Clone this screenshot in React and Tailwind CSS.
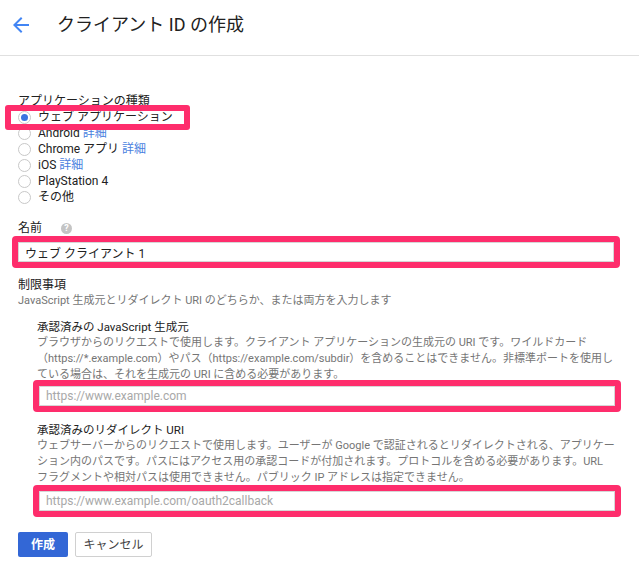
import React from "react";

const font = { fontFamily: 'Roboto, "Noto Sans CJK JP", sans-serif' };

/* pink annotation frame around a real input */
const Marked = ({ value, placeholder, className = "" }) => (
  <div className={`rounded-[4px] border-[6px] border-[#fe2d6c] ${className}`}>
    <input
      readOnly
      defaultValue={value}
      placeholder={placeholder}
      className="block h-[20px] w-full border border-[#d6d6d6] bg-white px-[6px] text-[12px] text-[#212121] outline-none placeholder:text-[#a8a8a8]"
    />
  </div>
);

const Radio = ({ checked, children }) => (
  <label className="flex h-4 items-center gap-[7px]">
    <span className="flex h-[13px] w-[13px] items-center justify-center rounded-full border border-[#c8c8c8] bg-white">
      {checked && <span className="h-[7px] w-[7px] rounded-full bg-[#3b74e0]" />}
    </span>
    <span>{children}</span>
  </label>
);

const More = () => <span className="text-[#4a7fe0]"> 詳細</span>;

const Lines = ({ lines }) => (
  <p className="text-[11px] leading-4 text-[#757575]">
    {lines.map((l) => (
      <span key={l} className="block whitespace-nowrap">{l}</span>
    ))}
  </p>
);

export default function App() {
  return (
    <div className="min-h-[575px] w-[639px] bg-white text-[12px] text-[#212121]" style={font}>
      <header className="flex h-[56px] items-center border-b border-[#e0e0e0]">
        <svg width="24" height="24" viewBox="0 0 24 24" className="ml-[9px] -mt-[6px]">
          <path d="M20 11H7.83l5.59-5.59L12 4l-8 8 8 8 1.41-1.41L7.83 13H20v-2z" fill="#4285f4" />
        </svg>
        <h1 className="ml-[24px] -mt-[6px] text-[18px] font-normal">クライアント ID の作成</h1>
      </header>

      <main className="pl-[18px] pr-[20px] pt-[37px]">
        <div className="leading-4">アプリケーションの種類</div>
        <div className="relative">
          <span className="pointer-events-none absolute -left-[13px] -top-[4px] h-[25px] w-[185px] rounded-[3px] border-[6px] border-[#fe2d6c]" />
          <Radio checked>ウェブ アプリケーション</Radio>
        </div>
        <Radio>Android<More /></Radio>
        <Radio>Chrome アプリ<More /></Radio>
        <Radio>iOS<More /></Radio>
        <Radio>PlayStation 4</Radio>
        <Radio>その他</Radio>

        <div className="mt-[15px] flex h-4 items-center gap-[19px]">
          名前
          <span className="flex h-[11px] w-[11px] items-center justify-center rounded-full bg-[#c4c4c4] text-[9px] font-bold leading-none text-white">?</span>
        </div>
        <Marked value="ウェブ クライアント 1" className="-ml-[6px] mr-[-1px]" />

        <div className="mt-[9px] leading-4">制限事項</div>
        <div className="text-[11px] leading-4 text-[#757575]">JavaScript 生成元とリダイレクト URI のどちらか、または両方を入力します</div>

        <section className="mt-[10px] pl-[19px]">
          <div className="text-[11.5px] leading-4">承認済みの JavaScript 生成元</div>
          <Lines
            lines={[
              "ブラウザからのリクエストで使用します。クライアント アプリケーションの生成元の URI です。ワイルドカード",
              "（https://*.example.com）やパス（https://example.com/subdir）を含めることはできません。非標準ポートを使用し",
              "ている場合は、それを生成元の URI に含める必要があります。",
            ]}
          />
          <Marked placeholder="https://www.example.com" className="-ml-[4px] -mt-[3px] w-[588px]" />

          <div className="mt-[10px] text-[11.5px] leading-4">承認済みのリダイレクト URI</div>
          <Lines
            lines={[
              "ウェブサーバーからのリクエストで使用します。ユーザーが Google で認証されるとリダイレクトされる、アプリケー",
              "ション内のパスです。パスにはアクセス用の承認コードが付加されます。プロトコルを含める必要があります。URL",
              "フラグメントや相対パスは使用できません。パブリック IP アドレスは指定できません。",
            ]}
          />
          <Marked placeholder="https://www.example.com/oauth2callback" className="-ml-[4px] -mt-[1px] w-[588px]" />
        </section>

        <div className="mt-[15px] flex gap-[7px]">
          <button className="h-[25px] w-[50px] rounded-[2px] bg-[#3367d6] text-[12px] font-bold text-white">作成</button>
          <button className="h-[25px] w-[77px] rounded-[2px] border border-[#d0d0d0] bg-white text-[12px] text-[#444]">キャンセル</button>
        </div>
      </main>
    </div>
  );
}
